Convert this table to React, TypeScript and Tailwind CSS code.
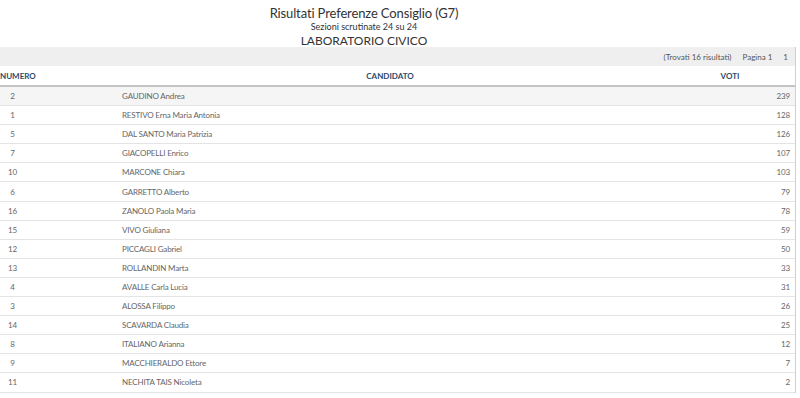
const rows: [number, string, number][] = [
  [2, "GAUDINO Andrea", 239],
  [1, "RESTIVO Erna Maria Antonia", 128],
  [5, "DAL SANTO Maria Patrizia", 126],
  [7, "GIACOPELLI Enrico", 107],
  [10, "MARCONE Chiara", 103],
  [6, "GARRETTO Alberto", 79],
  [16, "ZANOLO Paola Maria", 78],
  [15, "VIVO Giuliana", 59],
  [12, "PICCAGLI Gabriel", 50],
  [13, "ROLLANDIN Marta", 33],
  [4, "AVALLE Carla Lucia", 31],
  [3, "ALOSSA Filippo", 26],
  [14, "SCAVARDA Claudia", 25],
  [8, "ITALIANO Arianna", 12],
  [9, "MACCHIERALDO Ettore", 7],
  [11, "NECHITA TAIS Nicoleta", 2],
];

export default function App() {
  return (
    <div className="w-[800px] h-[398px] bg-white overflow-hidden font-['Lato',sans-serif]">
      <div className="w-[728px] pt-[6px] flex flex-col items-center text-[#333]">
        <h1 className="text-[13px] leading-[14px] tracking-[-0.01em]">
          Risultati Preferenze Consiglio (G7)
        </h1>
        <p className="text-[9px] leading-[14px]">Sezioni scrutinate 24 su 24</p>
        <h2 className="text-[12px] leading-[13px]">LABORATORIO CIVICO</h2>
      </div>

      <div className="w-[796px] border-r border-[#cfcfcf]">
        <div className="h-[19px] bg-[#efefef] flex items-center justify-end gap-[11px] pr-[7px] text-[8px] text-[#555]">
          <span>(Trovati 16 risultati)</span>
          <span>Pagina 1</span>
          <span>1</span>
        </div>
        <div className="h-[21px] grid grid-cols-[25px_90px_550px_130px] items-center border-b-2 border-[#c4c4c4] text-[8px] font-bold text-[#2b4a6b]">
          <span className="text-center whitespace-nowrap">NUMERO</span>
          <span />
          <span className="text-center">CANDIDATO</span>
          <span className="text-center">VOTI</span>
        </div>
        {rows.map(([n, name, v], i) => (
          <div
            key={n}
            className={`h-[19.1px] grid grid-cols-[25px_97px_543px_130px] items-center border-b border-[#e4e4e4] text-[8px] text-[#666] tracking-[-0.02em] ${
              i === 0 ? "bg-[#f5f5f5]" : "bg-white"
            }`}
          >
            <span className="text-center">{n}</span>
            <span />
            <span>{name}</span>
            <span className="text-right pr-[5px]">{v}</span>
          </div>
        ))}
      </div>
    </div>
  );
}
